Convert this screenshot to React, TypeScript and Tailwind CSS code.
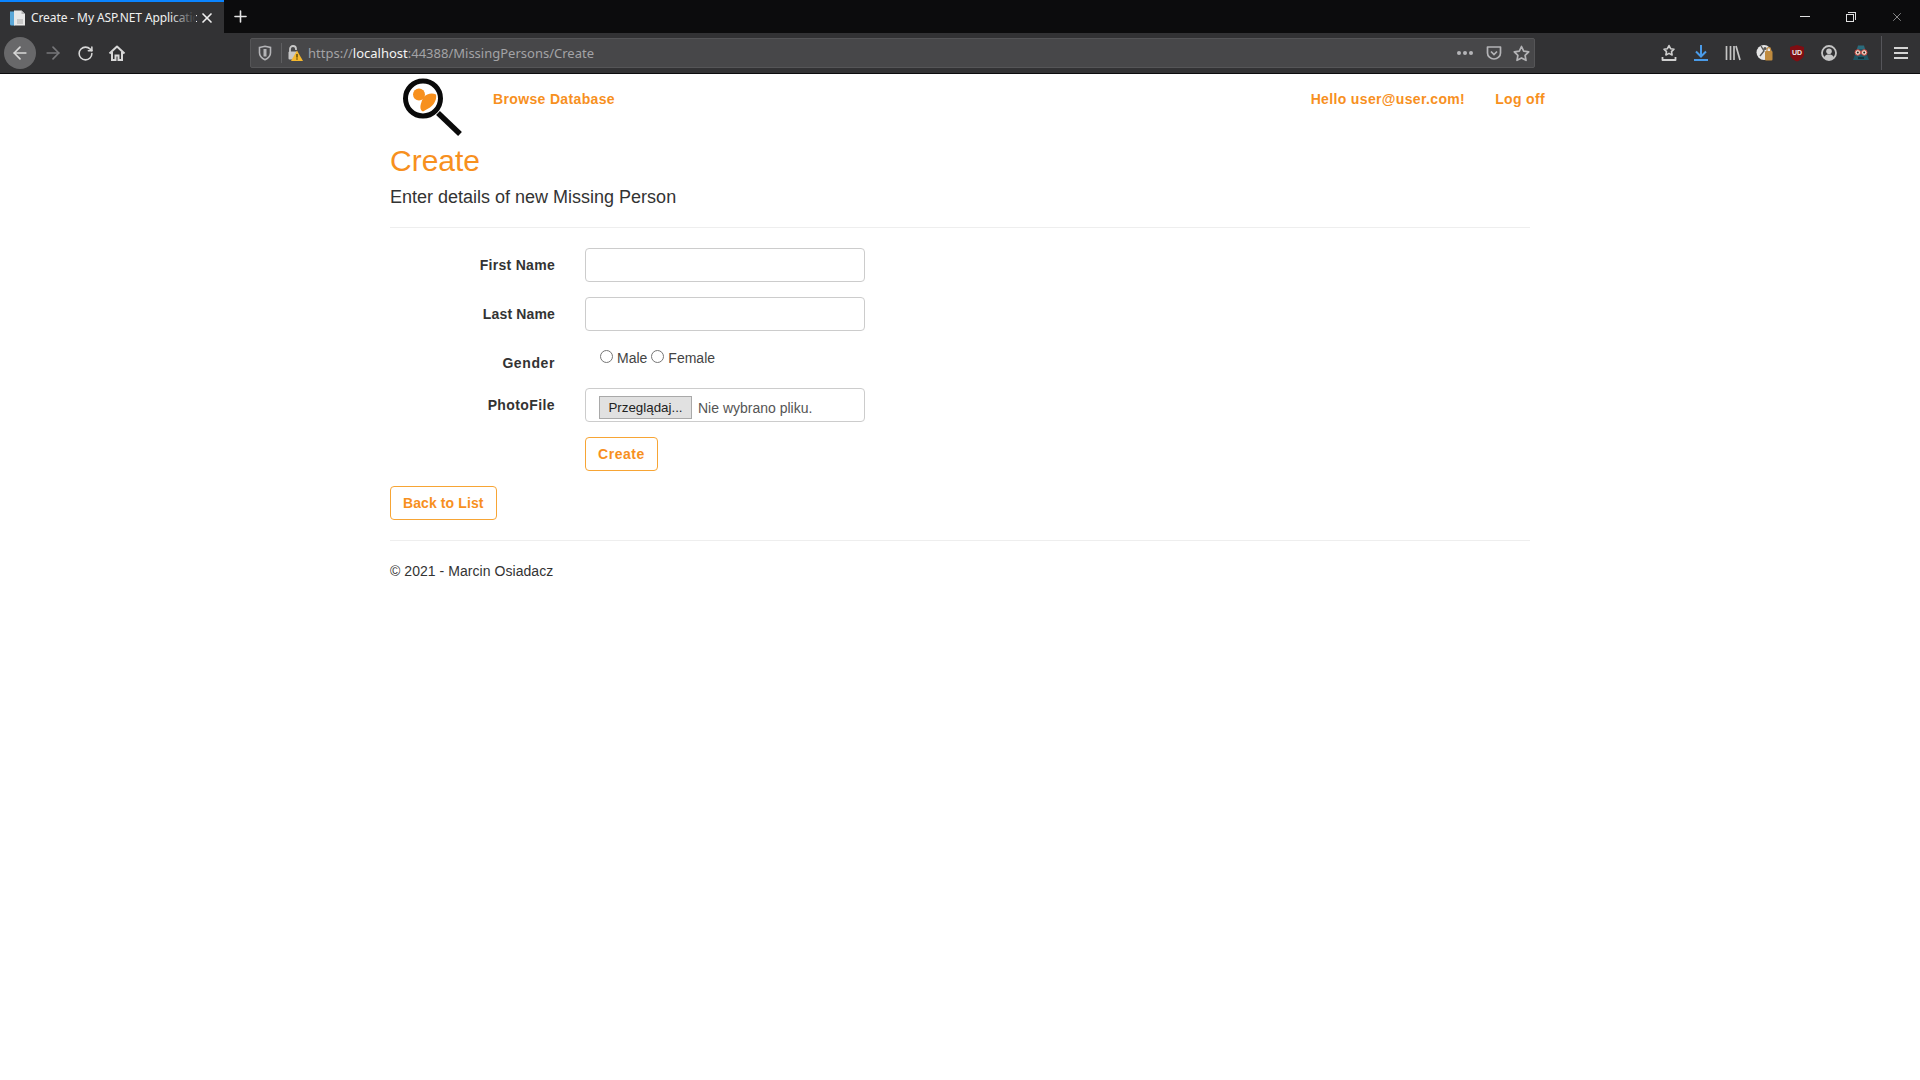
import { ArrowLeft, ArrowRight, RotateCw, Plus, X } from "lucide-react";

function TabIcon() {
  return (
    <svg width="18" height="18" viewBox="0 0 18 18">
      <path d="M1 2.500h5v14H2.500A1.500 1.500 0 0 1 1 15z" fill="#5aa7d8" />
      <path d="M5 1.500h7.500L16 5v11.500H5z" fill="#e8e8e8" />
      <path d="M12.500 1.500V5H16z" fill="#b5b5b5" />
      <rect x="8" y="10" width="6" height="5" fill="#c8c8c8" />
    </svg>
  );
}

function HomeIcon() {
  return (
    <svg width="18" height="18" viewBox="0 0 18 18" fill="none" stroke="#d8d8d8" strokeWidth="2">
      <path d="M1.500 9.500 9 2.500l7.500 7" strokeLinejoin="round" />
      <path d="M4 8v8h3.500v-4.500h3V16H14V8" />
    </svg>
  );
}

function ShieldIcon() {
  return (
    <svg width="16" height="16" viewBox="0 0 16 16" fill="none" stroke="#b4b4b7" strokeWidth="1.600">
      <path d="M2.500 2.500 8 1.200l5.500 1.300v5.200c0 3.200-2.500 5.600-5.500 7-3-1.400-5.500-3.800-5.500-7z" />
      <path d="M8 4v7.500" strokeWidth="3" />
    </svg>
  );
}

function InsecureLockIcon() {
  return (
    <svg width="16" height="18" viewBox="0 0 16 18">
      <path d="M3 8V5a3 3 0 0 1 6 0v1" fill="none" stroke="#c8c8c8" strokeWidth="1.800" />
      <rect x="1.500" y="7.500" width="9" height="8" rx="1" fill="#c8c8c8" />
      <path d="M10 6.500 16 17H4z" fill="#f5b82e" />
      <rect x="9.400" y="10" width="1.200" height="3.600" fill="#3b3000" />
      <rect x="9.400" y="14.400" width="1.200" height="1.200" fill="#3b3000" />
    </svg>
  );
}

function PocketIcon() {
  return (
    <svg width="16" height="16" viewBox="0 0 16 16" fill="none" stroke="#b4b4b7" strokeWidth="1.700">
      <path d="M1.500 2h13v6a6.500 6 0 0 1-13 0z" strokeLinejoin="round" />
      <path d="m5 6.500 3 3 3-3" />
    </svg>
  );
}

function StarIcon() {
  return (
    <svg width="17" height="17" viewBox="0 0 17 17" fill="none" stroke="#b4b4b7" strokeWidth="1.700" strokeLinejoin="round">
      <path d="m8.500 1.500 2.200 4.600 5 .7-3.600 3.500.9 5-4.500-2.400L4 15.300l.9-5L1.300 6.800l5-.7z" />
    </svg>
  );
}

function BookmarkTrayIcon() {
  return (
    <svg width="16" height="18" viewBox="0 0 16 18" fill="none" stroke="#cfcfcf" strokeWidth="1.600" strokeLinejoin="round">
      <path d="m8 1.500 1.600 3.200 3.400.5-2.500 2.400.6 3.400L8 9.400l-3.100 1.600.6-3.400L3 5.200l3.400-.5z" />
      <path d="M1.500 13v3h13v-3" strokeWidth="1.800" />
    </svg>
  );
}

function DownloadIcon() {
  return (
    <svg width="16" height="18" viewBox="0 0 16 18" fill="none" stroke="#4a9be8" strokeWidth="2">
      <path d="M8 1v11M3 7.500 8 12.500l5-5" />
      <path d="M1 16h14" />
    </svg>
  );
}

function LibraryIcon() {
  return (
    <svg width="16" height="16" viewBox="0 0 16 16" fill="none" stroke="#c4c4c4" strokeWidth="1.700">
      <path d="M1.500 1v14M5.500 1v14M9 1v14M11 1l4 14" />
    </svg>
  );
}

function ContainerIcon() {
  return (
    <svg width="18" height="18" viewBox="0 0 18 18">
      <circle cx="8" cy="8.500" r="7.500" fill="#e6e6e6" />
      <path d="M5 2 8 7 4 12" fill="none" stroke="#555" strokeWidth="1.400" />
      <circle cx="9" cy="4.500" r="1.600" fill="#555" />
      <rect x="9" y="7" width="7.500" height="9.500" rx="1" fill="#c08b3e" />
      <path d="M11 7V5.500a1.800 1.800 0 0 1 3.600 0V7" fill="none" stroke="#c08b3e" strokeWidth="1.200" />
    </svg>
  );
}

function UblockIcon() {
  return (
    <svg width="16" height="18" viewBox="0 0 16 18">
      <path d="M8 1 15 3v7c0 3.500-3.500 6-7 7.500C4.500 16 1 13.500 1 10V3z" fill="#7f0d12" />
      <text x="8" y="11" textAnchor="middle" fontSize="7" fontWeight="700" fill="#eee" fontFamily="Liberation Sans, sans-serif">
        UD
      </text>
    </svg>
  );
}

function AccountIcon() {
  return (
    <svg width="16" height="16" viewBox="0 0 16 16">
      <circle cx="8" cy="8" r="7" fill="none" stroke="#c4c4c4" strokeWidth="1.800" />
      <circle cx="8" cy="6.200" r="2.800" fill="#c4c4c4" />
      <path d="M3 12.500c1-2.500 3-3 5-3s4 .5 5 3a7 7 0 0 1-10 0z" fill="#c4c4c4" />
    </svg>
  );
}

function PrivacyIcon() {
  return (
    <svg width="18" height="18" viewBox="0 0 18 18">
      <path d="M1 16 5 5c1-3 7-3 8 0l4 11z" fill="#1f5564" />
      <path d="M6 1.500h6L13 5H5z" fill="#2b6b7c" />
      <circle cx="5.800" cy="8.500" r="2.800" fill="#f0d8c8" stroke="#c9413a" strokeWidth="1" />
      <circle cx="12.200" cy="8.500" r="2.800" fill="#f0d8c8" stroke="#c9413a" strokeWidth="1" />
      <circle cx="5.800" cy="8.500" r="1" fill="#222" />
      <circle cx="12.200" cy="8.500" r="1" fill="#222" />
      <path d="M6 14h6" stroke="#0c2a32" strokeWidth="1.500" />
    </svg>
  );
}

function MenuIcon() {
  return (
    <svg width="14" height="14" viewBox="0 0 14 14" fill="#d4d4d4">
      <rect y="1" width="14" height="2" />
      <rect y="6" width="14" height="2" />
      <rect y="11" width="14" height="2" />
    </svg>
  );
}

function Logo() {
  return (
    <svg width="64" height="60" viewBox="0 0 64 60">
      <circle cx="21" cy="20.500" r="17.500" fill="#fff" stroke="#0a0a0a" strokeWidth="5" />
      <path d="M36 35 58 56" stroke="#0a0a0a" strokeWidth="5.500" />
      <circle cx="17" cy="16.500" r="6" fill="#f7901e" />
      <path d="M21 19.500c4-4 9-5 13-3 1 5-2 10-6 13l-7 4c-3-1-3-5-2-8z" fill="#f7901e" />
    </svg>
  );
}

function Field({ label, tracking, children }: { label: string; tracking: string; children?: React.ReactNode }) {
  return (
    <div className="mb-[15px] flex">
      <label className={`w-[165px] pt-[7px] text-right text-[14px] leading-[20px] font-bold text-[#333] ${tracking}`}>
        {label}
      </label>
      <div className="ml-[30px]">{children}</div>
    </div>
  );
}

const outlineButton =
  "block h-[34px] rounded-[4px] border border-[#f7a535] bg-white px-3 text-[14px] leading-[32px] font-bold text-[#f7901e]";

export default function App() {
  return (
    <div className="min-h-[1080px] bg-white font-['Liberation_Sans',sans-serif] text-[14px] text-[#333]">
      {/* browser chrome */}
      <div className="flex h-[33px] bg-[#0c0c0d] font-['Noto_Sans',sans-serif] text-[#f0f0f0]">
        <div className="relative flex h-[33px] w-[224px] items-center border-t-2 border-[#0a84ff] bg-[#323234] pl-[9px]">
          <TabIcon />
          <span className="ml-[4px] w-[166px] overflow-hidden text-[12px] tracking-[-0.1px] whitespace-nowrap">
            Create - My ASP.NET Application
          </span>
          <div className="absolute top-0 bottom-0 left-[170px] w-[26px] bg-gradient-to-r from-transparent to-[#323234]" />
          <X size={16} strokeWidth={2.500} className="absolute top-[8px] left-[199px] text-[#eee]" />
        </div>
        <Plus size={19} strokeWidth={2} className="mt-[7px] ml-[7px] text-[#e6e6e6]" />
        <div className="ml-auto flex items-center text-[#e0e0e0]">
          <div className="flex w-[46px] justify-center">
            <div className="h-px w-[10px] bg-[#e0e0e0]" />
          </div>
          <div className="flex w-[46px] justify-center">
            <div className="relative h-[10px] w-[10px]">
              <div className="absolute top-[2px] left-0 h-[8px] w-[8px] border border-[#e0e0e0]" />
              <div className="absolute top-0 left-[2px] h-[8px] w-[8px] border-t border-r border-[#e0e0e0]" />
            </div>
          </div>
          <div className="flex w-[46px] justify-center">
            <X size={14} strokeWidth={1} />
          </div>
        </div>
      </div>
      <div className="flex h-[41px] items-center border-b border-[#0c0c0d] bg-[#323234] font-['Noto_Sans',sans-serif]">
        <div className="ml-[4px] flex h-[32px] w-[32px] items-center justify-center rounded-full bg-[#68686a]">
          <ArrowLeft size={20} strokeWidth={2} className="text-[#d8d8d8]" />
        </div>
        <ArrowRight size={20} strokeWidth={2} className="ml-[7px] text-[#77777a]" />
        <RotateCw size={17} strokeWidth={2.200} className="ml-[14px] text-[#d8d8d8]" />
        <div className="ml-[14px]">
          <HomeIcon />
        </div>
        <div className="ml-[124px] flex h-[30px] w-[1285px] items-center rounded-[2px] border border-[#555557] bg-[#474749] pr-[4px]">
          <div className="ml-[6px] flex h-[20px] w-[25px] items-center border-r border-[#5f5f61]">
            <ShieldIcon />
          </div>
          <div className="ml-[5px]">
            <InsecureLockIcon />
          </div>
          <span className="ml-[5px] pt-[2px] text-[13px] whitespace-nowrap text-[#a3a3a6]">
            https://<span className="text-[#f4f4f4]">localhost</span>:44388/MissingPersons/Create
          </span>
          <div className="ml-auto flex items-center">
            <div className="flex gap-[2px]">
              <div className="h-[4px] w-[4px] rounded-full bg-[#b4b4b7]" />
              <div className="h-[4px] w-[4px] rounded-full bg-[#b4b4b7]" />
              <div className="h-[4px] w-[4px] rounded-full bg-[#b4b4b7]" />
            </div>
            <div className="ml-[13px]">
              <PocketIcon />
            </div>
            <div className="ml-[11px]">
              <StarIcon />
            </div>
          </div>
        </div>
        <div className="ml-auto flex items-center">
          <div className="flex w-[32px] justify-center">
            <BookmarkTrayIcon />
          </div>
          <div className="flex w-[32px] justify-center">
            <DownloadIcon />
          </div>
          <div className="flex w-[32px] justify-center">
            <LibraryIcon />
          </div>
          <div className="flex w-[32px] justify-center">
            <ContainerIcon />
          </div>
          <div className="flex w-[32px] justify-center">
            <UblockIcon />
          </div>
          <div className="flex w-[32px] justify-center">
            <AccountIcon />
          </div>
          <div className="flex w-[32px] justify-center">
            <PrivacyIcon />
          </div>
          <div className="ml-[4px] h-[34px] w-px bg-[#55555a]" />
          <div className="flex w-[38px] justify-center">
            <MenuIcon />
          </div>
        </div>
      </div>

      {/* page */}
      <div className="mx-auto w-[1170px]">
        <nav className="flex h-[62px] pt-[4px] pl-[27px] font-bold tracking-[0.35px] text-[#f7901e]">
          <Logo />
          <a className="mt-[11px] ml-[27px] leading-[20px]">Browse Database</a>
          <a className="mt-[11px] ml-auto leading-[20px]">Hello user@user.com!</a>
          <a className="mt-[11px] ml-[30px] leading-[20px]">Log off</a>
        </nav>
        <div className="px-[15px]">
          <h2 className="mt-[8px] text-[30px] leading-[33px] text-[#f7901e]">Create</h2>
          <h4 className="mt-[10px] text-[18px] leading-[20px] text-[#333]">Enter details of new Missing Person</h4>
          <hr className="mt-[20px] mb-[20px] border-[#eee]" />
          <form>
            <Field label="First Name" tracking="tracking-[0.3px]">
              <div className="h-[34px] w-[280px] rounded-[4px] border border-[#ccc]" />
            </Field>
            <Field label="Last Name" tracking="tracking-[0.15px]">
              <div className="h-[34px] w-[280px] rounded-[4px] border border-[#ccc]" />
            </Field>
            <Field label="Gender" tracking="tracking-[0.6px]">
              <div className="flex h-[27px] items-start pt-[2px] pl-[15px] leading-[20px] text-[#444]">
                <input type="radio" name="gender" className="mt-[2px] h-[13px] w-[13px]" />
                <span className="ml-[4px]">Male</span>
                <input type="radio" name="gender" className="mt-[2px] ml-[4px] h-[13px] w-[13px]" />
                <span className="ml-[4px]">Female</span>
              </div>
            </Field>
            <Field label="PhotoFile" tracking="tracking-[0.4px]">
              <div className="flex h-[34px] w-[280px] items-center rounded-[4px] border border-[#ccc] pt-[5px] pl-[13px] text-[#555]">
                <button
                  type="button"
                  className="h-[23px] w-[93px] border border-[#a9a9a9] bg-[#e1e1e1] text-[13.33px] text-[#222]"
                >
                  Przeglądaj...
                </button>
                <span className="ml-[6px] pt-px text-[14px]">Nie wybrano pliku.</span>
              </div>
            </Field>
            <div className="mb-[15px] ml-[195px]">
              <button type="button" className={`${outlineButton} tracking-[0.55px]`}>
                Create
              </button>
            </div>
          </form>
          <a className={`${outlineButton} w-fit tracking-[0.1px]`}>Back to List</a>
          <hr className="mt-[20px] mb-[20px] border-[#eee]" />
          <footer className="leading-[20px] tracking-[0.05px] text-[#333]">© 2021 - Marcin Osiadacz</footer>
        </div>
      </div>
    </div>
  );
}
